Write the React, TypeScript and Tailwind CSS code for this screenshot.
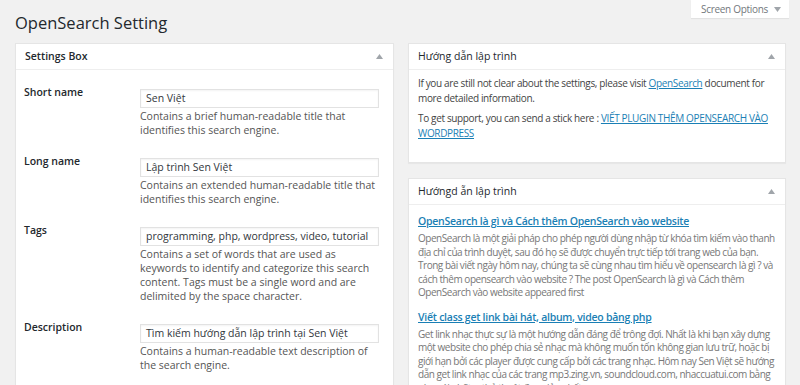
import React from "react";

function Caret({ up = true }: { up?: boolean }) {
  return (
    <svg width="7" height="5" viewBox="0 0 7 5" className="shrink-0">
      {up ? (
        <polygon points="0,5 3.5,0 7,5" fill="#a0a5aa" />
      ) : (
        <polygon points="0,0 3.5,5 7,0" fill="#a0a5aa" />
      )}
    </svg>
  );
}

function BoxHeader({ title, bold }: { title: string; bold?: boolean }) {
  return (
    <div className="flex h-[26px] items-center justify-between border-b border-[#eeeeee] pl-[9px] pr-[10px]">
      <h2
        className={
          "text-[10.5px] text-[#23282d] " + (bold ? "font-semibold" : "font-normal")
        }
      >
        {title}
      </h2>
      <Caret />
    </div>
  );
}

const fields = [
  {
    label: "Short name",
    value: "Sen Việt",
    desc: "Contains a brief human-readable title that identifies this search engine.",
  },
  {
    label: "Long name",
    value: "Lập trình Sen Việt",
    desc: "Contains an extended human-readable title that identifies this search engine.",
  },
  {
    label: "Tags",
    value: "programming, php, wordpress, video, tutorial",
    desc: "Contains a set of words that are used as keywords to identify and categorize this search content. Tags must be a single word and are delimited by the space character.",
  },
  {
    label: "Description",
    value: "Tìm kiếm hướng dẫn lập trình tại Sen Việt",
    desc: "Contains a human-readable text description of the search engine.",
  },
];

const posts = [
  {
    title: "OpenSearch là gì và Cách thêm OpenSearch vào website",
    summary:
      "OpenSearch là một giải pháp cho phép người dùng nhập từ khóa tìm kiếm vào thanh địa chỉ của trình duyệt, sau đó họ sẽ được chuyển trực tiếp tới trang web của bạn. Trong bài viết ngày hôm nay, chúng ta sẽ cùng nhau tìm hiểu về opensearch là gì ? và cách thêm opensearch vào website ? The post OpenSearch là gì và Cách thêm OpenSearch vào website appeared first",
  },
  {
    title: "Viết class get link bài hát, album, video bằng php",
    summary:
      "Get link nhạc thực sự là một hướng dẫn đáng để trông đợi. Nhất là khi bạn xây dựng một website cho phép chia sẻ nhạc mà không muốn tốn không gian lưu trữ, hoặc bị giới hạn bởi các player được cung cấp bởi các trang nhạc. Hôm nay Sen Việt sẽ hướng dẫn get link nhạc của các trang mp3.zing.vn, soundcloud.com, nhaccuatui.com bằng php với những thủ thuật đơn giản nhất.",
  },
];

export default function App() {
  return (
    <div className="h-[385px] overflow-hidden bg-[#f1f1f1] font-['Open_Sans',sans-serif] text-[#444]">
      <div className="flex items-start justify-between pl-[15px] pr-[11px]">
        <h1 className="pt-[12px] text-[16.5px] leading-[22px] font-normal text-[#23282d]">
          OpenSearch Setting
        </h1>
        <button className="flex h-[18px] w-[98px] items-center justify-center gap-[6px] bg-white pl-[2px] text-[10px] tracking-[-0.3px] text-[#72777c] shadow-[0_1px_1px_rgba(0,0,0,0.06)]">
          Screen Options
          <Caret up={false} />
        </button>
      </div>

      <div className="mt-[9px] flex items-start gap-[14px] pl-[15px] pr-[14px]">
        {/* left */}
        <div className="w-[379px] border border-[#e5e5e5] bg-white shadow-[0_1px_1px_rgba(0,0,0,0.04)]">
          <BoxHeader title="Settings Box" bold />
          <div className="flex flex-col gap-[21px] pl-[8px] pt-[19px] pb-[20px]">
            {fields.map((f) => (
              <div key={f.label} className="flex items-start">
                <label className="-mt-[4px] w-[116px] text-[10.5px] leading-[14px] font-semibold text-[#23282d]">
                  {f.label}
                </label>
                <div className="w-[239px]">
                  <div className="flex h-[19px] items-center border border-[#e2e2e2] pl-[5px] text-[10.5px] text-[#32373c] shadow-[inset_0_1px_2px_rgba(0,0,0,0.05)]">
                    {f.value}
                  </div>
                  <p className="mt-[1px] text-[10.5px] leading-[14px] text-[#555]">{f.desc}</p>
                </div>
              </div>
            ))}
          </div>
        </div>

        {/* right */}
        <div className="flex flex-1 flex-col gap-[15px]">
          <div className="border border-[#e5e5e5] bg-white shadow-[0_1px_1px_rgba(0,0,0,0.04)]">
            <BoxHeader title="Hướng dẫn lập trình" />
            <div className="px-[9px] pt-[6px] pb-[21px] text-[10px] leading-[15px] tracking-[-0.35px] text-[#444]">
              <p className="mb-[5px]">
                If you are still not clear about the settings, please visit{" "}
                <a className="text-[#1a7fb5] underline">OpenSearch</a> document for more
                detailed information.
              </p>
              <p>
                To get support, you can send a stick here :{" "}
                <a className="text-[#1a7fb5] underline">VIẾT PLUGIN THÊM OPENSEARCH VÀO WORDPRESS</a>
              </p>
            </div>
          </div>

          <div className="border border-[#e5e5e5] bg-white shadow-[0_1px_1px_rgba(0,0,0,0.04)]">
            <BoxHeader title="Hướngd ẫn lập trình" />
            <div className="px-[9px] pt-[8px] pb-[10px]">
              {posts.map((p) => (
                <div key={p.title} className="mb-[9px]">
                  <a className="block text-[10.5px] leading-[16px] font-semibold tracking-[-0.25px] text-[#1a7fb5] underline">
                    {p.title}
                  </a>
                  <p className="mt-[3px] text-[10px] leading-[13.5px] tracking-[-0.47px] text-[#777]">
                    {p.summary}
                  </p>
                </div>
              ))}
            </div>
          </div>
        </div>
      </div>
    </div>
  );
}
